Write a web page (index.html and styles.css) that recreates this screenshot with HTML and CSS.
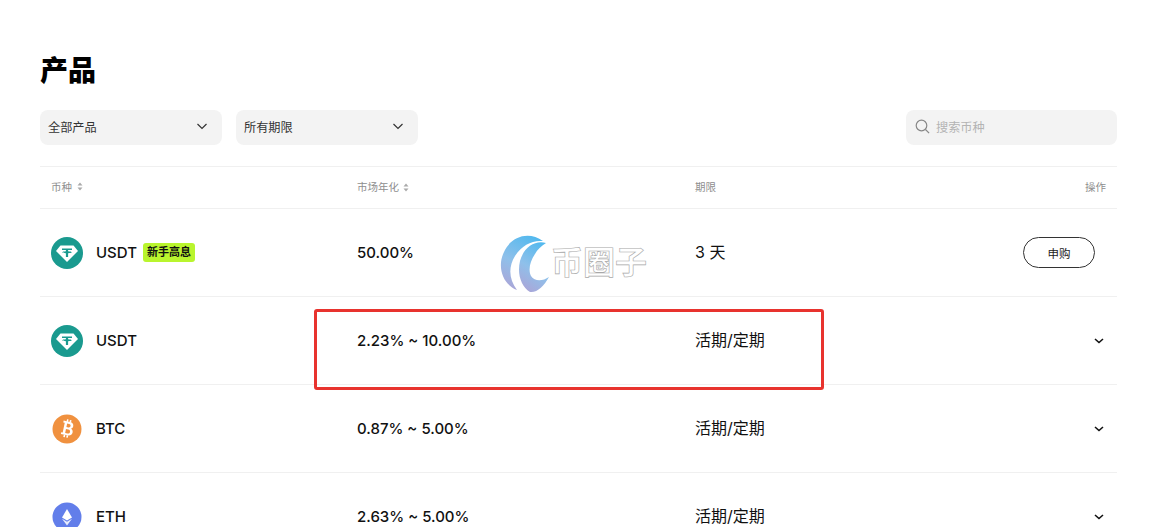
FILE: index.html

```html
<!DOCTYPE html>
<html>

<head>
    <title>产品</title>
    <link rel="stylesheet" href="styles.css">
</head>

<body>
    <div class="page">
        <h1>产品</h1>

        <div class="filters">
            <div class="select">
                <span>全部产品</span>
                <svg class="caret" width="12" height="7" viewBox="0 0 12 7"><path d="M1.500 1l4.500 4.500L10.500 1" /></svg>
            </div>
            <div class="select">
                <span>所有期限</span>
                <svg class="caret" width="12" height="7" viewBox="0 0 12 7"><path d="M1.500 1l4.500 4.500L10.500 1" /></svg>
            </div>
            <div class="search">
                <svg width="15" height="15" viewBox="0 0 15 15" class="search-icon"><circle cx="6.500" cy="6.500" r="5.300" /><path d="M10.500 10.500l3.600 3.600" /></svg>
                <span>搜索币种</span>
            </div>
        </div>

        <div class="row head">
            <div class="coin-cell head-cell">币种
                <svg class="sort" width="6" height="9" viewBox="0 0 6 9"><path d="M3 .5L5.500 3.500H.5zM3 8.500L.5 5.500h5z" /></svg>
            </div>
            <div class="head-cell">市场年化
                <svg class="sort" width="6" height="9" viewBox="0 0 6 9"><path d="M3 .5L5.500 3.500H.5zM3 8.500L.5 5.500h5z" /></svg>
            </div>
            <div class="head-cell">期限</div>
            <div class="action head-cell">操作</div>
        </div>

        <div class="row">
            <div class="coin-cell">
                <svg class="coin" width="32" height="32" viewBox="0 0 32 32">
                    <circle cx="16" cy="16" r="16" fill="#1a9a8f" />
                    <path d="M9.500 8.500h13l4.500 5.500-11 11L5 14z" fill="#fff" />
                    <path d="M11 11.500h10v1.500h-3.900v1.200c1.900.1 3.400.5 3.900 1-.5.500-2 .9-3.900 1V20h-2.200v-3.800c-1.900-.1-3.400-.5-3.900-1 .5-.5 2-.9 3.900-1V13H11z" fill="#1a9a8f" />
                </svg>
                <span class="coin-name">USDT</span>
                <span class="tag">新手高息</span>
            </div>
            <div class="rate">50.00%</div>
            <div class="term">3 天</div>
            <div class="action"><button class="buy">申购</button></div>
        </div>

        <div class="row">
            <div class="coin-cell">
                <svg class="coin" width="32" height="32" viewBox="0 0 32 32">
                    <circle cx="16" cy="16" r="16" fill="#1a9a8f" />
                    <path d="M9.500 8.500h13l4.500 5.500-11 11L5 14z" fill="#fff" />
                    <path d="M11 11.500h10v1.500h-3.900v1.200c1.900.1 3.400.5 3.900 1-.5.500-2 .9-3.900 1V20h-2.200v-3.800c-1.900-.1-3.400-.5-3.900-1 .5-.5 2-.9 3.900-1V13H11z" fill="#1a9a8f" />
                </svg>
                <span class="coin-name">USDT</span>
            </div>
            <div class="rate">2.23% ~ 10.00%</div>
            <div class="term">活期/定期</div>
            <div class="action"><svg class="more" width="10" height="6" viewBox="0 0 10 6"><path d="M1 1l4 3.500L9 1" /></svg></div>
        </div>

        <div class="row">
            <div class="coin-cell">
                <svg class="coin" width="32" height="32" viewBox="0 0 32 32">
                    <circle cx="16" cy="16" r="14.500" fill="#f0913f" />
                    <g transform="rotate(12 16 16)">
                        <path d="M11 8.500h6.500c2.500 0 4 1.400 4 3.400 0 1.400-.7 2.400-1.900 2.900 1.600.5 2.600 1.700 2.600 3.400 0 2.400-1.800 3.900-4.500 3.900H11v-1.800h1.500V10.300H11zM15 10.600v3.600h2c1.200 0 1.900-.7 1.900-1.800 0-1.100-.7-1.800-1.900-1.800zm0 5.600v4h2.400c1.300 0 2.100-.8 2.100-2s-.8-2-2.100-2z" fill="#fff" fill-rule="evenodd" />
                        <path d="M14 6.500h1.600v2.500H14zM17 6.500h1.600v2.500H17zM14 22h1.600v2.500H14zM17 22h1.600v2.500H17z" fill="#fff" />
                    </g>
                </svg>
                <span class="coin-name">BTC</span>
            </div>
            <div class="rate">0.87% ~ 5.00%</div>
            <div class="term">活期/定期</div>
            <div class="action"><svg class="more" width="10" height="6" viewBox="0 0 10 6"><path d="M1 1l4 3.500L9 1" /></svg></div>
        </div>

        <div class="row">
            <div class="coin-cell">
                <svg class="coin" width="32" height="32" viewBox="0 0 32 32">
                    <circle cx="16" cy="16" r="14.500" fill="#627eea" />
                    <path d="M16 8l5 8.500-5 3-5-3z" fill="#fff" />
                    <path d="M16 20.800l5-3-5 6.700-5-6.700z" fill="#fff" opacity=".85" />
                </svg>
                <span class="coin-name">ETH</span>
            </div>
            <div class="rate">2.63% ~ 5.00%</div>
            <div class="term">活期/定期</div>
            <div class="action"><svg class="more" width="10" height="6" viewBox="0 0 10 6"><path d="M1 1l4 3.500L9 1" /></svg></div>
        </div>

        <!-- watermark and red box lie over the table -->
        <div class="watermark">
            <svg width="54" height="60" viewBox="0 0 54 60">
                <defs>
                    <linearGradient id="swirl" x1="0.7" y1="0" x2="0.3" y2="1">
                        <stop offset="0" stop-color="#54b9ee" />
                        <stop offset="0.55" stop-color="#8fc0ea" />
                        <stop offset="1" stop-color="#aaa6d8" />
                    </linearGradient>
                </defs>
                <path d="M44 7C30 -3 12 2 5 18C-2 32 3 50 18 56C10 46 9 33 16 22C23 11 33 6 44 7z" fill="url(#swirl)" />
                <path d="M47 9C36 6 25 13 21 27C18 40 22 52 31 58C38 59 45 52 50 43C44 47 36 48 32 42C29 36 31 27 36 20C38 16 42 12 47 9z" fill="url(#swirl)" />
            </svg>
            <span class="watermark-text">币圈子</span>
        </div>
        <div class="red-box"></div>
    </div>
</body>
</html>
```

FILE: styles.css

```css
* {
    box-sizing: border-box;
}

html, body {
    margin: 0;
    height: 527px;
    overflow: hidden;
}

body {
    font-family: Inter, "Noto Sans CJK SC", sans-serif;
    background-color: #fff;
    color: #111;
}

.page {
    position: relative;
    height: 527px;
    overflow: hidden;
    padding: 54px 33px 0 40px;
}

h1 {
    margin: 0 0 21px;
    font-size: 28px;
    line-height: 35px;
    font-weight: 900;
    color: #000;
}

.filters {
    display: flex;
    gap: 14px;
    height: 35px;
    margin-bottom: 21px;
}

.select {
    width: 182px;
    background-color: #f3f3f3;
    border-radius: 8px;
    display: flex;
    align-items: center;
    justify-content: space-between;
    padding: 0 14px 2px 8px;
    font-size: 12.2px;
    color: #333;
}

.caret {
    fill: none;
    stroke: #333;
    stroke-width: 1.2;
}

.search {
    margin-left: auto;
    width: 211px;
    background-color: #f3f3f3;
    border-radius: 8px;
    display: flex;
    align-items: center;
    gap: 6px;
    padding: 0 9px 2px;
    font-size: 12.2px;
    color: #b4b4b4;
}

.search-icon {
    fill: none;
    stroke: #888;
    stroke-width: 1.2;
}

.row {
    display: grid;
    grid-template-columns: 317px 338px 1fr 120px;
    align-items: center;
    height: 88px;
    border-top: 1px solid #f0f0f0;
    font-size: 16px;
}

.row.head {
    height: 42px;
}

.head-cell {
    font-size: 10.5px;
    color: #8e8e8e;
    padding-bottom: 2px;
}

.sort {
    fill: #aaa;
    margin-left: 1px;
    vertical-align: -1px;
}

.coin-cell {
    display: flex;
    align-items: center;
    gap: 4px;
    padding-left: 11px;
}

.coin {
    margin-right: 9px;
}

.coin-name {
    font-size: 15px;
    font-weight: 500;
    margin-right: 2px;
}

.tag {
    background-color: #b9f52e;
    border-radius: 3px;
    font-size: 11px;
    font-weight: 700;
    line-height: 19px;
    padding: 0 4px;
    color: #111;
}

.rate {
    font-size: 15px;
    font-weight: 500;
    padding-bottom: 1px;
}

.term {
    padding-bottom: 3px;
}

.action {
    display: flex;
    justify-content: flex-end;
    padding-right: 11px;
}

.row:not(.head) .action {
    padding-right: 13px;
}

.buy {
    width: 72px;
    height: 31px;
    margin-right: 9px;
    background-color: #fff;
    border: 1px solid #333;
    border-radius: 16px;
    font-family: inherit;
    font-size: 11.5px;
    color: #222;
}

.more {
    fill: none;
    stroke: #111;
    stroke-width: 1.6;
}

.watermark {
    position: absolute;
    left: 499px;
    top: 234px;
    display: flex;
    align-items: center;
}

.watermark-text {
    font-size: 32px;
    line-height: 32px;
    font-weight: 700;
    margin: -2px 0 0 -2px;
    color: #fff;
    -webkit-text-stroke: 0.6px #a8a8a8;
}

.red-box {
    position: absolute;
    left: 314px;
    top: 309px;
    width: 510px;
    height: 81px;
    border: 3px solid #e8332e;
    border-radius: 3px;
}
```
